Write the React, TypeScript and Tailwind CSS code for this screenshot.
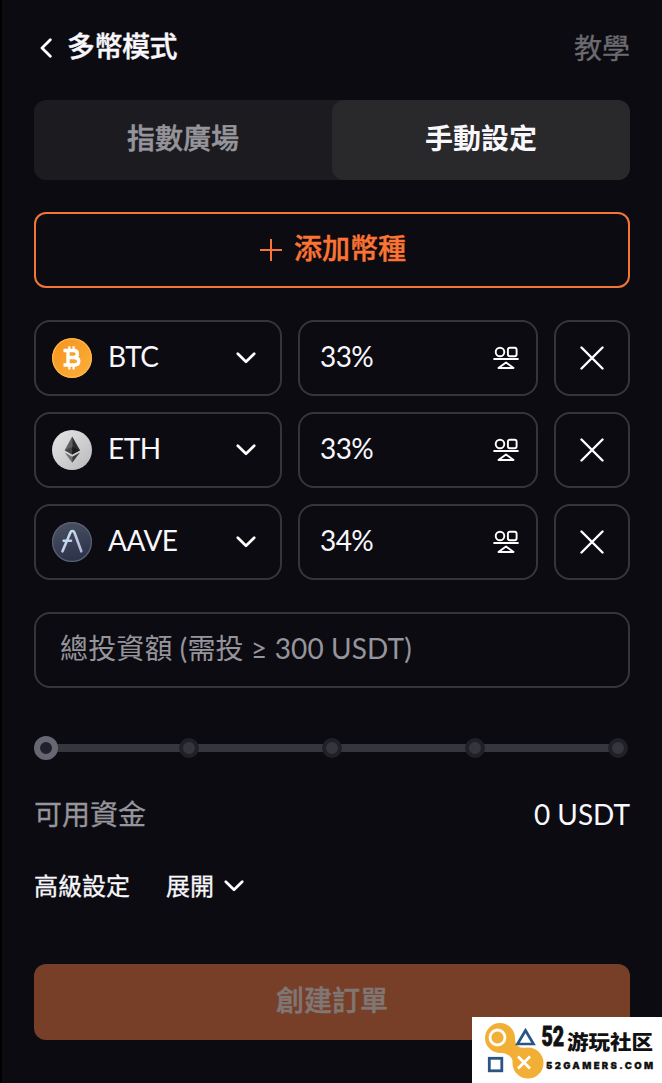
import { useState } from "react";

const COINS = [
  { symbol: "BTC", percent: 33 },
  { symbol: "ETH", percent: 33 },
  { symbol: "AAVE", percent: 34 },
];

function BtcIcon() {
  return (
    <svg width="40" height="40" viewBox="0 0 40 40">
      <defs>
        <linearGradient id="btc" x1="0" y1="0" x2="1" y2="1">
          <stop offset="0" stopColor="#f7931d" />
          <stop offset="1" stopColor="#fbaf3c" />
        </linearGradient>
      </defs>
      <circle cx="20" cy="20" r="20" fill="url(#btc)" />
      <circle cx="20" cy="20" r="19.3" fill="none" stroke="#ffc14f" strokeWidth="1" />
      <g fill="none" stroke="#fff">
        <path d="M17.3 8.3V12M21.6 8.3V12M17.3 27.5V31.5M21.6 27.5V31.5" strokeWidth="2.2" />
        <path
          d="M11.5 12.5H21.5Q25.4 12.5 25.4 16Q25.4 19.5 21.5 19.5H16M21.5 19.5Q26.8 19.5 26.8 23.2Q26.8 27 21.5 27H11.5M16 12.5V27"
          strokeWidth="3.4"
        />
      </g>
    </svg>
  );
}

function EthIcon() {
  return (
    <svg width="40" height="40" viewBox="0 0 40 40">
      <defs>
        <linearGradient id="eth" x1="0" y1="0" x2="1" y2="1">
          <stop offset="0" stopColor="#e6e6e8" />
          <stop offset="0.5" stopColor="#d0d0d2" />
          <stop offset="1" stopColor="#b9b9bd" />
        </linearGradient>
      </defs>
      <circle cx="20" cy="20" r="20" fill="url(#eth)" />
      <path d="M20.2 6.5L12.7 20.2L20.2 24.5Z" fill="#606062" />
      <path d="M20.2 6.5L28 20.2L20.2 24.5Z" fill="#2d2d30" />
      <path d="M20.2 17L12.7 20.2L20.2 24.5Z" fill="#444447" />
      <path d="M20.2 17L28 20.2L20.2 24.5Z" fill="#1c1c1f" />
      <path d="M12.7 22.4L20.2 26.7V32.8Z" fill="#717174" />
      <path d="M28 22.4L20.2 26.7V32.8Z" fill="#3b3b3e" />
    </svg>
  );
}

function AaveIcon() {
  return (
    <svg width="40" height="40" viewBox="0 0 40 40">
      <defs>
        <linearGradient id="aave" x1="0.3" y1="0" x2="0.6" y2="1">
          <stop offset="0" stopColor="#4a5162" />
          <stop offset="1" stopColor="#2b3149" />
        </linearGradient>
        <linearGradient id="aaveMark" x1="0" y1="0" x2="1" y2="1">
          <stop offset="0" stopColor="#c9eaf3" />
          <stop offset="1" stopColor="#b9b4dc" />
        </linearGradient>
      </defs>
      <circle cx="20" cy="20" r="20" fill="url(#aave)" />
      <circle cx="20" cy="20" r="19.4" fill="none" stroke="#596072" strokeWidth="1.2" />
      <path
        d="M10.5 29.3L18.4 10.4Q19 9 20.4 9Q21.8 9 22.4 10.4L29.3 29.3M11.7 18.8H19"
        fill="none"
        stroke="url(#aaveMark)"
        strokeWidth="2.6"
        strokeLinecap="round"
      />
    </svg>
  );
}

function CoinIcon({ symbol }: { symbol: string }) {
  if (symbol === "BTC") return <BtcIcon />;
  if (symbol === "ETH") return <EthIcon />;
  return <AaveIcon />;
}

function ChevronDown() {
  return (
    <svg width="20" height="12" viewBox="0 0 20 12" fill="none">
      <path d="M1.8 1.8L10 9.8L18.2 1.8" stroke="#fff" strokeWidth="2.7" strokeLinecap="round" strokeLinejoin="round" />
    </svg>
  );
}

function BalanceIcon() {
  return (
    <svg width="26" height="24" viewBox="0 0 26 24" fill="none" stroke="#fff" strokeWidth="1.9">
      <circle cx="7" cy="6" r="4.3" />
      <rect x="14.9" y="1.7" width="8.7" height="8.6" rx="2" />
      <path d="M0.4 13H25.6" strokeWidth="2" />
      <path d="M13 16.4L20.5 22H5.500Z" strokeLinejoin="round" />
    </svg>
  );
}

// watermark in the corner
function Watermark() {
  return (
    <div className="absolute right-0 bottom-0 h-[66px] w-[190px] bg-white">
      <svg width="190" height="66" viewBox="0 0 190 66">
        <circle cx="28" cy="21" r="15" fill="#f2af36" />
        <circle cx="56" cy="46" r="15.5" fill="#f2af36" />
        <path d="M25 35.500Q39 35 41.500 46L53 31Q42 31 43 20Z" fill="#f2af36" />
        <circle cx="25.5" cy="20.5" r="7.5" fill="none" stroke="#fff" strokeWidth="2.8" />
        <path d="M45.5 27L53.5 13.5L61.5 27Z" fill="none" stroke="#295584" strokeWidth="2.7" />
        <rect x="17.3" y="41.3" width="12.5" height="12.5" fill="none" stroke="#295584" strokeWidth="2.8" />
        <path d="M46 39.5L58 51.5M58 39.5L46 51.5" stroke="#fff" strokeWidth="2.8" />
        <text transform="translate(69.5 29) scale(0.7 1)" fontFamily="Roboto" fontWeight="900" fontSize="28" fill="#111" stroke="#111" strokeWidth="0.8">
          52
        </text>
        <text x="95" y="32.5" fontFamily="Noto Sans CJK SC" fontWeight="900" fontSize="20" textLength="86" lengthAdjust="spacingAndGlyphs" fill="#111">
          游玩社区
        </text>
        <text x="74" y="52" fontFamily="Inter" fontWeight="900" fontSize="9.5" textLength="107" fill="#111" stroke="#111" strokeWidth="0.3">
          52GAMERS.COM
        </text>
      </svg>
    </div>
  );
}

export default function App() {
  const [coins, setCoins] = useState(COINS);
  const [tab, setTab] = useState("manual");

  const removeCoin = (symbol: string) => {
    setCoins(coins.filter((coin) => coin.symbol !== symbol));
  };

  return (
    <div className="relative h-[1083px] w-[662px] overflow-hidden border-l-2 border-black bg-[#0c0b11] pr-8 pl-8 font-['Lato','Noto_Sans_CJK_TC',sans-serif] text-[28px] text-[#f8f7fc]">
      <header className="flex h-[100px] items-start justify-between pt-[26px] leading-10">
        <div className="flex items-center font-medium">
          <svg width="12" height="20" viewBox="0 0 12 20" fill="none" className="mt-[3px] mr-[15px] ml-[6px]">
            <path d="M10.3 1.8L2 10L10.3 18.2" stroke="#fff" strokeWidth="2.8" strokeLinecap="round" strokeLinejoin="round" />
          </svg>
          <h1 className="tracking-[-0.5px] [-webkit-text-stroke:0.4px]">多幣模式</h1>
        </div>
        <button className="mt-0.5 text-[#6b6a70] [-webkit-text-stroke:0.3px]">教學</button>
      </header>

      <div className="grid h-20 grid-cols-2 rounded-xl bg-[#1c1b20] font-medium">
        <button
          className={`rounded-xl pb-1 ${tab === "index" ? "bg-[#29292b] font-bold" : "text-[#96959b] [-webkit-text-stroke:0.5px]"}`}
          onClick={() => setTab("index")}
        >
          指數廣場
        </button>
        <button
          className={`rounded-xl pb-1 ${tab === "manual" ? "bg-[#29292b] font-bold" : "text-[#96959b] [-webkit-text-stroke:0.5px]"}`}
          onClick={() => setTab("manual")}
        >
          手動設定
        </button>
      </div>

      <button className="mt-8 flex h-[76px] w-full items-center justify-center gap-3 rounded-xl border-2 border-[#f37637] pl-0.5 font-medium text-[#fb7433]">
        <svg width="22" height="22" viewBox="0 0 22 22">
          <path d="M11 0V22M0 11H22" stroke="currentColor" strokeWidth="2" />
        </svg>
        <span className="pb-1 [-webkit-text-stroke:0.4px]">添加幣種</span>
      </button>

      <div className="mt-8 flex flex-col gap-4">
        {coins.map((coin) => (
          <div key={coin.symbol} className="flex h-[76px] gap-4">
            <button className="flex w-[248px] items-center rounded-2xl border-2 border-[#35363b] pr-6 pl-4">
              <CoinIcon symbol={coin.symbol} />
              <span className="mr-auto ml-4 pb-1 tracking-[-0.5px]">{coin.symbol}</span>
              <ChevronDown />
            </button>
            <div className="flex w-[240px] items-center justify-between rounded-2xl border-2 border-[#35363b] pr-[17px] pl-5">
              <span className="pb-1 tracking-[-0.6px]">{coin.percent}%</span>
              <BalanceIcon />
            </div>
            <button
              className="flex w-[76px] items-center justify-center rounded-2xl border-2 border-[#35363b]"
              onClick={() => removeCoin(coin.symbol)}
            >
              <svg width="24" height="24" viewBox="0 0 24 24">
                <path d="M1.5 1.5L22.5 22.5M22.5 1.5L1.5 22.5" stroke="#fff" strokeWidth="2.4" strokeLinecap="round" />
              </svg>
            </button>
          </div>
        ))}
      </div>

      <div className="mt-8 flex h-[76px] items-center rounded-2xl border-2 border-[#35363b] pb-1 pl-6 tracking-[0.13px] text-[#96959b]">
        總投資額 (需投 ≥ 300 USDT)
      </div>

      <svg width="596" height="24" viewBox="0 0 596 24" className="mt-12">
        <path d="M12 12H584" stroke="#36373e" strokeWidth="8" />
        {[155, 298, 441, 584].map((x) => (
          <circle key={x} cx={x} cy="12" r="8" fill="#35363d" stroke="#202126" strokeWidth="4" />
        ))}
        <circle cx="12" cy="12" r="9" fill="#20212a" stroke="#666772" strokeWidth="6" />
      </svg>

      <div className="mt-[34px] flex items-center justify-between leading-10">
        <span className="text-[#96959b] [-webkit-text-stroke:0.3px]">可用資金</span>
        <span>0 USDT</span>
      </div>

      <div className="mt-8 flex items-center text-2xl leading-10 [-webkit-text-stroke:0.3px]">
        <span className="mr-9">高級設定</span>
        <span className="mr-2.5">展開</span>
        <ChevronDown />
      </div>

      <button className="mt-[58px] h-[76px] w-full rounded-xl bg-[#773f27] pb-1 font-medium text-[#807775] [-webkit-text-stroke:0.5px]">
        創建訂單
      </button>

      <Watermark />
    </div>
  );
}
